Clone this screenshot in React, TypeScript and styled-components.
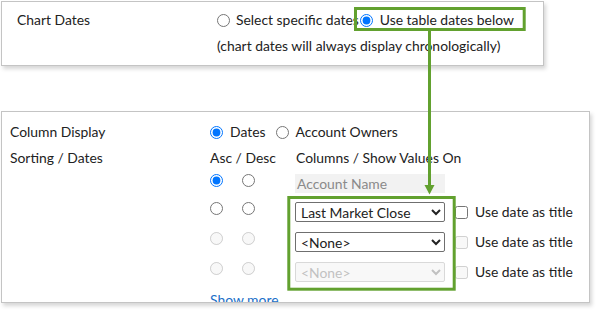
import React from "react";
import styled, { createGlobalStyle } from "styled-components";

const GlobalStyle = createGlobalStyle`
  html, body { margin: 0; padding: 0; background: #ffffff; }
  body { font-family: Lato, "Open Sans", Arial, sans-serif; font-size: 13.9px; color: #222; }
  * { box-sizing: border-box; }
`;

const Page = styled.div`
  position: relative;
  width: 598px;
  height: 314px;
  padding: 1px 0 0 1px;
  overflow: hidden;
`;

const Panel = styled.section<{ $w: number; $h: number; $pt: number; $pl: number }>`
  width: ${(p) => p.$w}px;
  height: ${(p) => p.$h}px;
  border: 1px solid #c4c4c4;
  background: #fff;
  box-shadow: 2px 3px 4px rgba(0, 0, 0, 0.16);
  padding: ${(p) => p.$pt}px 0 0 ${(p) => p.$pl}px;
  display: grid;
  grid-template-columns: 200px 1fr;
  grid-auto-rows: min-content;
  row-gap: 6px;
  overflow: hidden;
`;

const BottomPanel = styled(Panel)`
  margin-top: 45px;
`;

const Label = styled.div`
  height: 20px;
  line-height: 20px;
  white-space: nowrap;
`;

const Line = styled.div`
  display: flex;
  align-items: center;
  height: 20px;
  line-height: 20px;
  white-space: nowrap;
`;

const Radio = styled.input.attrs({ type: "radio" })<{ $ml?: number; $mr?: number }>`
  width: 13px;
  height: 13px;
  margin: 0 ${(p) => p.$mr ?? 0}px 0 ${(p) => p.$ml ?? 0}px;
  flex: none;
`;

const Note = styled.div`
  grid-column: 2;
  height: 20px;
  line-height: 20px;
  white-space: nowrap;
`;

const Stack = styled.div`
  display: flex;
  flex-direction: column;
`;

const SortRow = styled.div<{ $h: number }>`
  display: flex;
  align-items: flex-start;
  height: ${(p) => p.$h}px;
  white-space: nowrap;
`;

const HeadCell = styled.div<{ $w?: number }>`
  width: ${(p) => (p.$w ? `${p.$w}px` : "auto")};
  height: 20px;
  line-height: 20px;
  flex: none;
`;

const RadioPair = styled.div`
  width: 85px;
  flex: none;
  display: flex;
  gap: 19px;
`;

const StaticField = styled.div`
  width: 150px;
  height: 19px;
  line-height: 19px;
  background: #f2f2f2;
  color: #8a8a8a;
  padding-left: 2px;
`;

const Select = styled.select`
  width: 150px;
  height: 20px;
  font-family: Lato, "Open Sans", Arial, sans-serif;
  font-size: 13.9px;
  color: #222;
  padding: 0 0 0 1px;
  margin: 0;
  border: 1px solid #6f6f6f;
  border-radius: 2px;
  background-color: #fff;
  &:disabled {
    color: #a8a8a8;
    border-color: #c9c9c9;
    background-color: #f6f6f6;
  }
`;

const Check = styled.input.attrs({ type: "checkbox" })`
  width: 13px;
  height: 13px;
  margin: 4px 7px 0 10px;
  flex: none;
`;

const CheckLabel = styled.span`
  line-height: 20px;
`;

const MoreLink = styled.a`
  color: #1b6fc8;
  line-height: 16px;
  text-decoration: none;
  cursor: pointer;
`;

const Overlay = styled.svg`
  position: absolute;
  left: 0;
  top: 0;
  pointer-events: none;
`;

const GREEN = "#62a12f";

const rows = [
  { value: "Last Market Close", disabled: false },
  { value: "<None>", disabled: false },
  { value: "<None>", disabled: true },
];

export default function App() {
  return (
    <>
      <GlobalStyle />
      <Page>
        <Panel $w={543} $h={65} $pt={8} $pl={15}>
          <Label>Chart Dates</Label>
          <Line>
            <Radio name="cd" $mr={6} />
            <span>Select specific dates</span>
            <Radio name="cd" defaultChecked $ml={1} $mr={7} />
            <span>Use table dates below</span>
          </Line>
          <Note>(chart dates will always display chronologically)</Note>
        </Panel>

        <BottomPanel $w={589} $h={192} $pt={10} $pl={8}>
          <Label>Column Display</Label>
          <Line>
            <Radio name="col" defaultChecked $mr={7} />
            <span>Dates</span>
            <Radio name="col" $ml={10} $mr={7} />
            <span>Account Owners</span>
          </Line>
          <Label>Sorting / Dates</Label>
          <Stack>
            <SortRow $h={26}>
              <HeadCell $w={86}>Asc / Desc</HeadCell>
              <HeadCell>Columns / Show Values On</HeadCell>
            </SortRow>
            <SortRow $h={28}>
              <RadioPair>
                <Radio name="s0" defaultChecked />
                <Radio name="s0" />
              </RadioPair>
              <StaticField>Account Name</StaticField>
            </SortRow>
            {rows.map((r, i) => (
              <SortRow $h={30} key={i}>
                <RadioPair>
                  <Radio name={`s${i + 1}`} disabled={i > 0} />
                  <Radio name={`s${i + 1}`} disabled={i > 0} />
                </RadioPair>
                <Select defaultValue={r.value} disabled={r.disabled}>
                  <option>Last Market Close</option>
                  <option>{"<None>"}</option>
                </Select>
                <Check disabled={i > 0} />
                <CheckLabel>Use date as title</CheckLabel>
              </SortRow>
            ))}
            <SortRow $h={20}>
              <MoreLink>Show more</MoreLink>
            </SortRow>
          </Stack>
        </BottomPanel>

        <Overlay width={598} height={314} viewBox="0 0 598 314">
          <rect x={355.5} y={8.5} width={168.7} height={21} fill="none" stroke={GREEN} strokeWidth={3} />
          <line x1={429.5} y1={31} x2={429.5} y2={187} stroke={GREEN} strokeWidth={3} />
          <polygon points="424.5,185 434.5,185 429.5,194.5" fill={GREEN} />
          <rect x={288.8} y={197.5} width={165.4} height={91.7} fill="none" stroke={GREEN} strokeWidth={3} />
        </Overlay>
      </Page>
    </>
  );
}
